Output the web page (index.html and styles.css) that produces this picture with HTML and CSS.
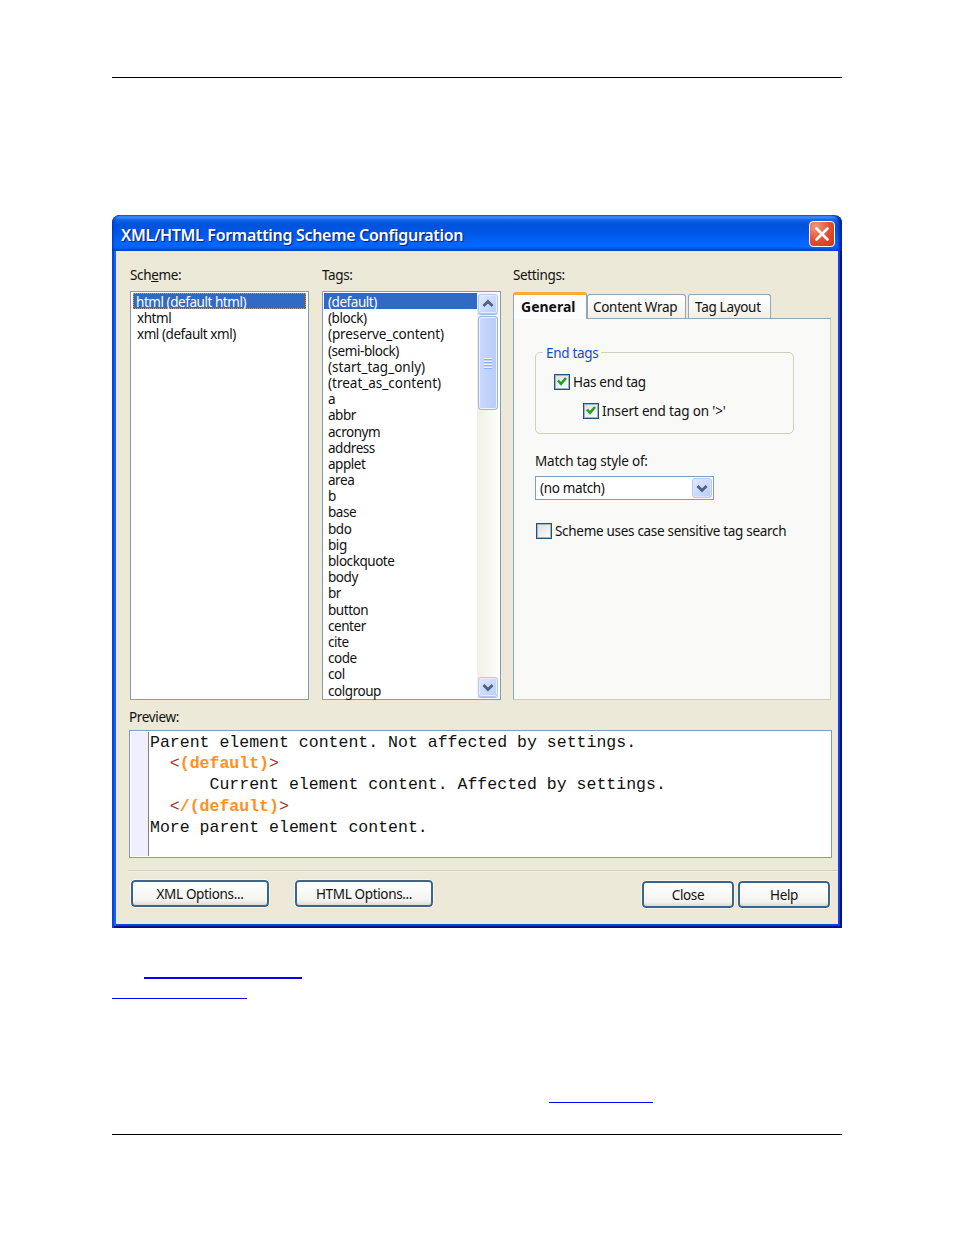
FILE: index.html
```
<!DOCTYPE html>
<html lang="en">
<head>
<meta charset="utf-8">
<title>XML/HTML Formatting Scheme Configuration</title>
<link rel="stylesheet" href="styles.css">
</head>
<body>
<main class="page">
  <hr class="rule">
  <section class="dialog">
    <header class="titlebar">
      <h1 class="title">XML/HTML Formatting Scheme Configuration</h1>
      <button class="close" aria-label="Close window"><svg width="26" height="26" viewBox="0 0 26 26"><path d="M7.500 7.500l11 11M18.500 7.500l-11 11" stroke="#fff" stroke-width="2.600" stroke-linecap="round"/></svg></button>
    </header>
    <div class="content">
      <div class="columns">
        <div class="column">
          <div class="label">Sch<u>e</u>me:</div>
          <ul class="list">
            <li class="selected focused">html (default html)</li><li>xhtml</li><li>xml (default xml)</li>
          </ul>
        </div>
        <div class="column">
          <div class="label">Tags:</div>
          <div class="list with-scroll">
            <ul class="items">
              <li class="selected">(default)</li><li>(block)</li><li class="wide">(preserve_content)</li><li>(semi-block)</li><li class="wider">(start_tag_only)</li><li class="wider">(treat_as_content)</li><li>a</li><li>abbr</li><li>acronym</li><li>address</li><li>applet</li><li>area</li><li>b</li><li>base</li><li>bdo</li><li>big</li><li>blockquote</li><li>body</li><li>br</li><li>button</li><li>center</li><li>cite</li><li>code</li><li>col</li><li>colgroup</li>
            </ul>
            <div class="scrollbar">
              <div class="arrow"><svg width="18" height="18" viewBox="0 0 18 18"><path d="M4.500 11L9 6.500l4.500 4.500" fill="none" stroke="#4d6185" stroke-width="2.800"/></svg></div>
              <div class="thumb"><i></i><i></i><i></i><i></i></div>
              <div class="arrow down"><svg width="18" height="18" viewBox="0 0 18 18"><path d="M4.500 7L9 11.500l4.500-4.500" fill="none" stroke="#4d6185" stroke-width="2.800"/></svg></div>
            </div>
          </div>
        </div>
        <div class="column settings">
          <div class="label">Settings:</div>
          <div class="tabs"><div class="tab active">General</div><div class="tab wrap-tab">Content Wrap</div><div class="tab layout-tab">Tag Layout</div></div>
          <div class="panel">
            <fieldset class="group">
              <legend>End tags</legend>
              <label class="check"><span class="box"><svg width="14" height="14" viewBox="0 0 14 14"><path d="M3 5.500L6 8.800l5-5.800" fill="none" stroke="#21a121" stroke-width="2.600"/></svg></span><span>Has end tag</span></label>
              <label class="check nested"><span class="box"><svg width="14" height="14" viewBox="0 0 14 14"><path d="M3 5.500L6 8.800l5-5.800" fill="none" stroke="#21a121" stroke-width="2.600"/></svg></span><span>Insert end tag on '&gt;'</span></label>
            </fieldset>
            <div class="match">Match tag style of:</div>
            <div class="select"><span>(no match)</span><div class="drop"><svg width="18" height="18" viewBox="0 0 18 18"><path d="M4.500 7L9 11.500l4.500-4.500" fill="none" stroke="#4d6185" stroke-width="2.800"/></svg></div></div>
            <label class="check search"><span class="box"></span><span>Scheme uses case sensitive tag search</span></label>
          </div>
        </div>
      </div>
      <div class="label preview-label">Preview:</div>
      <div class="preview">
        <div class="gutter"></div>
        <div class="code">
          <div class="line">Parent element content. Not affected by settings.</div>
          <div class="line indent"><span class="bracket">&lt;</span><b>(default)</b><span class="bracket">&gt;</span></div>
          <div class="line indent-more">Current element content. Affected by settings.</div>
          <div class="line indent"><span class="bracket">&lt;</span><b>/(default)</b><span class="bracket">&gt;</span></div>
          <div class="line">More parent element content.</div>
        </div>
      </div>
      <hr class="separator">
      <footer class="actions">
        <button class="btn large">XML Options...</button>
        <button class="btn large second">HTML Options...</button>
        <button class="btn small">Close</button>
        <button class="btn small help">Help</button>
      </footer>
    </div>
  </section>
  <div class="link-line first"></div>
  <div class="link-line second-line"></div>
  <div class="link-line third"></div>
  <hr class="rule bottom">
</main>
</body>
</html>
```
FILE: styles.css
```
* { box-sizing: border-box; }
body { margin: 0; background: #fff; color: #111; font: 13.5px/16px "Noto Sans", sans-serif; letter-spacing: -0.45px; }
ul { list-style: none; margin: 0; padding: 0; }
button { font: inherit; letter-spacing: inherit; color: inherit; }
.page { width: 954px; height: 1235px; padding: 77px 112px 0; overflow: hidden; }
.rule { height: 1px; margin: 0; border: 0; background: #000; }
.dialog { width: 730px; height: 713px; margin-top: 137px; padding: 0 4px 4px; border-radius: 8px 8px 0 0; background: #ece9d8; box-shadow: inset 2px 0 #0046e0, inset -2px -2px #00108c, inset 4px 0 #1c62ee, inset -4px -4px #0b46dc; overflow: hidden; }
.titlebar { height: 36px; margin: 0 -4px; padding: 0 7px 0 9px; display: flex; align-items: center; justify-content: space-between; border-radius: 8px 8px 0 0; background: linear-gradient(#0d55d5 0, #3c91fb 5%, #1063e7 14%, #0253dc 26%, #0055e5 48%, #0166fc 76%, #0066ff 88%, #0044cf 100%); box-shadow: inset -4px 0 3px -1px #0020a8, inset 3px 0 3px -2px #0030c0; }
.title { margin: 4px 0 0; font: 600 16px/24px "Noto Sans", sans-serif; letter-spacing: -0.31px; color: #fff; text-shadow: 1px 1px 1px #0a1883; }
.close { width: 26px; height: 26px; margin-top: 2px; padding: 0; border: 1px solid #fff; border-radius: 4px; background: radial-gradient(circle at 25% 20%, #f09a80, #e35132 50%, #c93612); }
.close svg { display: block; margin: -1px; }
.content { padding: 16px 6px 0 13px; }
.columns { display: grid; grid-template-columns: 180px 180px 318px; column-gap: 12px; margin-left: 1px; }
.settings { margin-left: -1px; margin-right: 1px; }
.label { height: 24px; line-height: 16px; letter-spacing: -0.35px; }
.list { width: 179px; height: 409px; padding: 1px; border: 1px solid #7f9db9; background: #fff; }
.list li { height: 16.2px; line-height: 18px; padding-left: 4px; white-space: nowrap; }
.list > li { margin: 0 1px; }
.list > .selected { padding-left: 3px; }
.list .selected { color: #fff; background: #316ac5; }
.focused { outline: 1px dotted #d99a3a; outline-offset: -1px; }
.with-scroll { display: flex; }
.items { flex: 1; }
.list .wide { letter-spacing: -0.12px; }
.list .wider { letter-spacing: 0; }
.scrollbar { width: 22px; display: flex; flex-direction: column; padding: 1px; background: linear-gradient(90deg, #f0f0e8, #fefefa); }
.arrow, .drop { border: 1px solid #b4c8f6; border-radius: 3px; background: linear-gradient(135deg, #e1eafe, #b8ccfb); box-shadow: inset 0 0 0 1px #d8e3fe; }
.arrow { width: 20px; height: 20px; box-shadow: 0 1px #9db8ec, inset 0 0 0 1px #e4ecfe; }
.arrow svg, .drop svg { display: block; }
.thumb { height: 94px; margin-top: 2px; border: 1px solid #98b4e8; border-radius: 3px; background: linear-gradient(90deg, #c9d8fc, #b9cbf9); box-shadow: inset 0 0 0 1px #eef3ff; display: flex; flex-direction: column; align-items: center; justify-content: center; gap: 1px; }
.thumb i { width: 8px; height: 2px; background: #eef4fe; border-bottom: 1px solid #8cb0f8; }
.down { margin-top: auto; }
.tabs { height: 27px; display: flex; align-items: flex-end; }
.tab { height: 24px; border: 1px solid #91a7b4; border-bottom: 0; border-radius: 3px 3px 0 0; background: linear-gradient(#fff, #f0efe7); line-height: 25px; white-space: nowrap; letter-spacing: -0.3px; }
.active { width: 74px; height: 27px; margin-bottom: -1px; padding-left: 7px; border-top: 3px solid #f7ae31; background: #fcfcfe; font-weight: 700; font-size: 14px; letter-spacing: 0; line-height: 23px; position: relative; }
.wrap-tab { width: 99px; padding-left: 5px; }
.layout-tab { width: 83px; margin-left: 2px; padding-left: 6px; }
.panel { height: 382px; padding: 33px 20px 0 21px; border: 1px solid #c9cdc0; border-top-color: #91a7b4; border-left-color: #91a7b4; background: #f9f9f7; }
.group { width: 259px; height: 82px; margin: 0; padding: 15px 0 0 18px; border: 1px solid #d0d0bf; border-radius: 5px; position: relative; min-width: 0; }
.group legend { position: absolute; top: -8px; left: 7px; padding: 0 3px; background: #f9f9f7; color: #1549d4; letter-spacing: -0.3px; }
.check { display: flex; align-items: center; gap: 3px; height: 28.5px; white-space: nowrap; letter-spacing: -0.3px; }
.box { width: 16px; height: 16px; flex: none; border: 1px solid #1c5180; box-shadow: inset 0 0 0 1px #9fb6c8; background: linear-gradient(135deg, #dcdcd7, #fff); }
.box svg { display: block; }
.nested { margin-left: 29px; letter-spacing: -0.15px; }
.match { margin-top: 19px; letter-spacing: -0.2px; }
.select { width: 179px; height: 24px; margin-top: 7px; padding: 0 1px 0 4px; display: flex; align-items: center; justify-content: space-between; border: 1px solid #7f9db9; background: #fff; letter-spacing: -0.35px; }
.drop { width: 20px; height: 20px; }
.search { margin: 17px 0 0 1px; }
.preview-label { height: 21px; margin-top: 9px; }
.preview { height: 128px; width: 703px; border: 1px solid #7f9db9; background: #fff; display: flex; padding: 1px; }
.gutter { width: 18px; border-right: 1px solid #808080; background: #efefff; }
.code { padding-left: 1px; font: 16.55px/21.2px "Liberation Mono", monospace; letter-spacing: 0; }
.line { display: flex; white-space: pre; height: 21.2px; }
.indent { padding-left: 2ch; }
.indent-more { padding-left: 6ch; }
.code b { color: #ff8f20; }
.bracket { color: #a03030; }
.separator { height: 2px; margin: 12px -6px 0 -1px; border: 0; background: #d0ceba; border-bottom: 1px solid #f4f2e8; }
.actions { display: flex; align-items: center; margin: 7px 0 0 2px; }
.btn { height: 27px; padding: 0; border: 2px solid #3a658c; border-radius: 4px; background: linear-gradient(#fff, #f3f3ef 80%, #dfddd3); outline: 1px solid #f6f4ec; letter-spacing: -0.35px; }
.large { width: 138px; }
.second { margin-left: 26px; }
.small { width: 92px; margin: 2px 0 0 209px; }
.help { margin-left: 4px; }
.link-line { height: 1px; background: #00f; }
.first { width: 158px; height: 2px; margin: 49px 0 0 32px; }
.second-line { width: 135px; margin-top: 19px; }
.third { width: 104px; margin: 103px 0 0 437px; }
.bottom { margin-top: 31px; }
```
